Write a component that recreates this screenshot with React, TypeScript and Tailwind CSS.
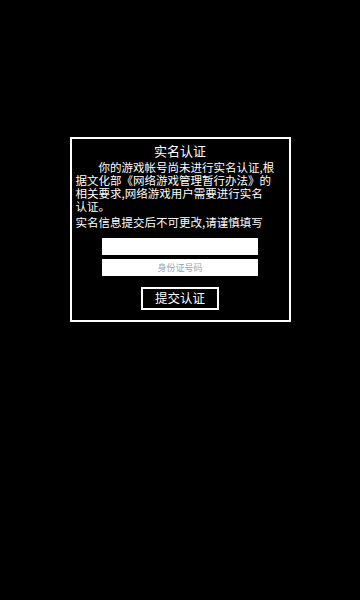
export default function App() {
  const font = { fontFamily: '"Noto Sans CJK SC", "Noto Sans", sans-serif' }
  return (
    <div className="w-[360px] h-[600px] bg-black flex flex-col items-center pt-[137px]" style={font}>
      <div className="w-[221px] h-[185px] border-2 border-white flex flex-col items-center text-white">
        <div className="text-[13px] leading-[16px] mt-[4px]">实名认证</div>
        <div className="w-full px-[4px] mt-[2px] text-[11.5px] leading-[13px]">
          <p className="indent-[23px] whitespace-nowrap">你的游戏帐号尚未进行实名认证,根</p>
          <p className="whitespace-nowrap">据文化部《网络游戏管理暂行办法》的</p>
          <p className="whitespace-nowrap">相关要求,网络游戏用户需要进行实名</p>
          <p className="whitespace-nowrap">认证。</p>
          <p className="whitespace-nowrap mt-[3px]">实名信息提交后不可更改,请谨慎填写</p>
        </div>
        <input
          type="text"
          className="mt-[9px] w-[156px] h-[17px] bg-white outline-none text-black text-[10px] text-center"
        />
        <input
          type="text"
          placeholder="身份证号码"
          className="mt-[4px] w-[156px] h-[17px] bg-white outline-none text-black text-[9px] text-center placeholder:text-gray-400"
        />
        <button
          type="button"
          className="mt-[11px] w-[78px] h-[23px] border-2 border-white text-[12.5px] leading-none text-white"
        >
          提交认证
        </button>
      </div>
    </div>
  )
}
